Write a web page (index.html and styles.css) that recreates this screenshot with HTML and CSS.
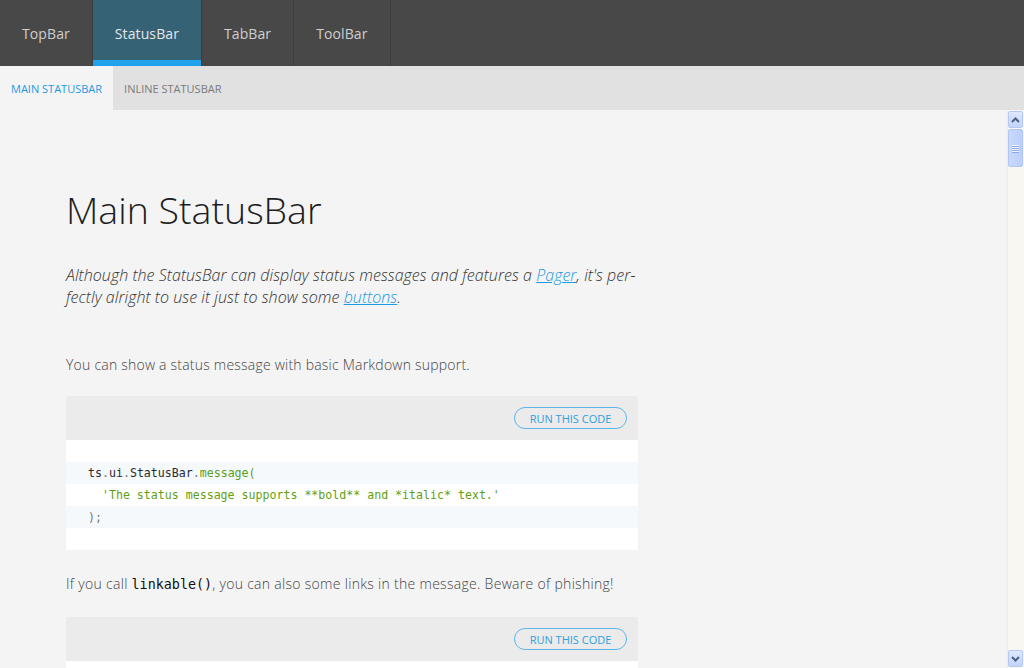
FILE: index.html
```html
<!DOCTYPE html>
<html>
<head>
<meta charset="utf-8">
<link rel="stylesheet" href="styles.css">
</head>
<body>
<header class="topbar">
  <a class="tab">TopBar</a>
  <a class="tab active">StatusBar</a>
  <a class="tab">TabBar</a>
  <a class="tab">ToolBar</a>
</header>
<nav class="subbar">
  <a class="subtab active">Main StatusBar</a>
  <a class="subtab">Inline StatusBar</a>
</nav>
<div class="viewport">
  <main class="content">
    <h1 class="title">Main StatusBar</h1>
    <p class="lead">Although the StatusBar can display status messages and features a <a href="#">Pager</a>, it's per&shy;fectly alright to use it just to show some <a href="#">buttons</a>.</p>
    <p class="text">You can show a status message with basic Markdown support.</p>
    <section class="codebox">
      <div class="codehead"><button class="run">RUN THIS CODE</button></div>
      <div class="codebody">
        <div class="line alt"><span class="id">ts</span><span class="pu">.</span><span class="id">ui</span><span class="pu">.</span><span class="id">StatusBar</span><span class="pu">.</span><span class="fn">message(</span></div>
        <div class="line"><span class="str">  'The status message supports **bold** and *italic* text.'</span></div>
        <div class="line alt"><span class="pu">);</span></div>
      </div>
    </section>
    <p class="text">If you call <code class="inline">linkable()</code>, you can also some links in the message. Beware of phishing!</p>
    <section class="codebox">
      <div class="codehead"><button class="run">RUN THIS CODE</button></div>
      <div class="codebody">
        <div class="line alt"><span class="id">ts</span><span class="pu">.</span><span class="id">ui</span><span class="pu">.</span><span class="id">StatusBar</span><span class="pu">.</span><span class="fn">message(</span></div>
      </div>
    </section>
  </main>
  <div class="scrollbar">
    <div class="sb-btn">
      <svg width="9" height="6" viewBox="0 0 9 6"><path d="M1 5 L4.5 1.5 L8 5" fill="none" stroke="#4d6185" stroke-width="2"/></svg>
    </div>
    <div class="sb-thumb"><span></span><span></span><span></span><span></span></div>
    <div class="sb-track"></div>
    <div class="sb-btn">
      <svg width="9" height="6" viewBox="0 0 9 6"><path d="M1 1 L4.5 4.5 L8 1" fill="none" stroke="#4d6185" stroke-width="2"/></svg>
    </div>
  </div>
</div>
</body>
</html>
```
FILE: styles.css
```css
* { box-sizing: border-box; }
html, body { margin: 0; padding: 0; }
body {
  width: 1024px;
  height: 668px;
  overflow: hidden;
  background: #f4f4f4;
  font-family: "Open Sans", "Liberation Sans", sans-serif;
}
.topbar {
  display: flex;
  height: 66px;
  background: #484848;
}
.tab {
  display: flex;
  align-items: center;
  padding: 0 22px;
  font-size: 14px;
  letter-spacing: 0.1px;
  color: #cfcfcf;
  border-right: 1px solid #3d3d3d;
}
.tab.active {
  background: #366276;
  color: #e6e6e6;
  box-shadow: inset 0 -6px 0 #1fa2ea;
}
.subbar {
  display: flex;
  height: 44px;
  background: #e1e1e1;
}
.subtab {
  display: flex;
  align-items: center;
  padding: 0 11px;
  font-size: 11px;
  text-transform: uppercase;
  color: #7a7a7a;
}
.subtab.active {
  background: #f4f4f4;
  color: #1d9ae4;
}
.viewport {
  display: flex;
  height: 558px;
  overflow: hidden;
}
.content {
  flex: 1;
  padding: 78px 0 0 66px;
}
.content > * { width: 572px; }
.title {
  margin: 0;
  font-size: 37.5px;
  font-weight: 300;
  line-height: 43px;
  color: #1e1e1e;
}
.lead {
  margin: 33px 0 0;
  font-size: 16px;
  font-style: italic;
  font-weight: 300;
  line-height: 22px;
  letter-spacing: 0.05px;
  color: #333;
  hyphens: manual;
}
.lead a { color: #1d9ae4; }
.text {
  margin: 46px 0 20px;
  font-size: 14px;
  font-weight: 300;
  line-height: 22px;
  letter-spacing: 0.22px;
  color: #444;
}
.codebox + .text {
  margin-top: 23px;
  margin-bottom: 21px;
  letter-spacing: 0.3px;
}
.inline {
  font-family: "DejaVu Sans Mono", monospace;
  font-size: 13.4px;
  letter-spacing: 0;
  font-weight: normal;
  color: #111;
}
.codebox {
  border-radius: 3px 3px 0 0;
  overflow: hidden;
}
.codehead {
  display: flex;
  justify-content: flex-end;
  align-items: center;
  height: 44px;
  padding-right: 11px;
  background: #ebebeb;
}
.run {
  height: 22px;
  width: 113px;
  padding: 0;
  border: 1px solid #5db6ea;
  border-radius: 11px;
  background: transparent;
  font-family: "Open Sans", "Liberation Sans", sans-serif;
  font-size: 11px;
  color: #2f9fe0;
}
.codebody {
  background: #fff;
  padding: 22px 0;
}
.line {
  height: 22px;
  line-height: 22px;
  padding-left: 22px;
  white-space: pre;
  font-family: "DejaVu Sans Mono", monospace;
  font-size: 11.6px;
}
.line.alt { background: #f5f9fc; }
.id { color: #2b2b2b; }
.pu { color: #777; }
.fn { color: #58a01c; }
.str { color: #5f9f10; }
.scrollbar {
  width: 17px;
  display: flex;
  flex-direction: column;
  background: #f8f7f2;
  border-left: 1px solid #eeede6;
  padding: 1px 0;
}
.sb-btn {
  height: 17px;
  margin: 0 1px 0 0;
  display: flex;
  align-items: center;
  justify-content: center;
  background: linear-gradient(#dfe8fd, #c2d3fb);
  border: 1px solid #b6c8f4;
  border-radius: 2px;
}
.sb-thumb {
  height: 38px;
  margin: 1px 1px 0 0;
  display: flex;
  flex-direction: column;
  align-items: center;
  justify-content: center;
  gap: 1px;
  background: linear-gradient(90deg, #c9d8fc, #bccffb);
  border: 1px solid #b3c5f2;
  border-radius: 2px;
}
.sb-thumb span {
  width: 7px;
  height: 1px;
  background: #eef3fe;
  box-shadow: 0 1px 0 #8fa8e8;
}
.sb-track { flex: 1; }
```
